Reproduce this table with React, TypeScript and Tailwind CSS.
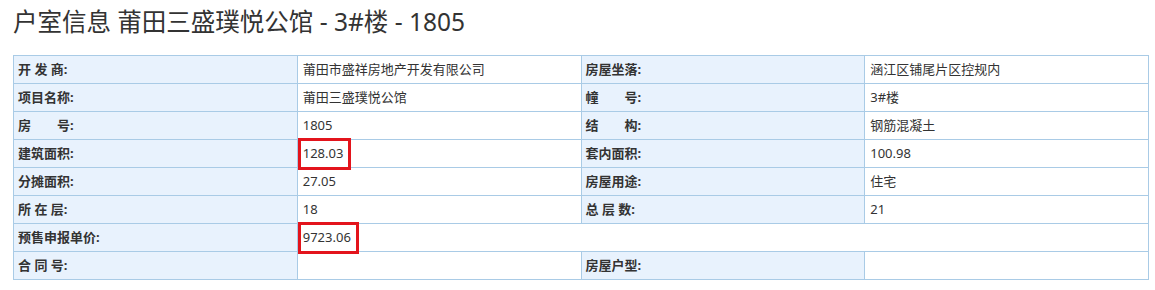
import type { ReactNode } from 'react';

type Cell = { label: string; value?: ReactNode; boxed?: boolean };

const rows: { left: Cell; right?: Cell }[] = [
  { left: { label: '开 发 商:', value: '莆田市盛祥房地产开发有限公司' }, right: { label: '房屋坐落:', value: '涵江区铺尾片区控规内' } },
  { left: { label: '项目名称:', value: '莆田三盛璞悦公馆' }, right: { label: '幢\u3000\u3000号:', value: '3#楼' } },
  { left: { label: '房\u3000\u3000号:', value: '1805' }, right: { label: '结\u3000\u3000构:', value: '钢筋混凝土' } },
  { left: { label: '建筑面积:', value: '128.03', boxed: true }, right: { label: '套内面积:', value: '100.98' } },
  { left: { label: '分摊面积:', value: '27.05' }, right: { label: '房屋用途:', value: '住宅' } },
  { left: { label: '所 在 层:', value: '18' }, right: { label: '总 层 数:', value: '21' } },
  { left: { label: '预售申报单价:', value: '9723.06', boxed: true } },
  { left: { label: '合 同 号:', value: '' }, right: { label: '房屋户型:', value: '' } },
];

function Value({ cell }: { cell: Cell }) {
  if (!cell.boxed) return <>{cell.value}</>;
  return (
    <span className="relative inline-block">
      {cell.value}
      <span className="pointer-events-none absolute -top-[6px] -bottom-[7px] -left-[5px] -right-[8px] border-[3px] border-[#e3141c]" />
    </span>
  );
}

const labelCls =
  'h-[28px] border border-[#a9cbe6] bg-[#e8f2fd] px-[4px] text-left align-middle text-[13px] font-bold text-[#333]';
const valueCls = 'h-[28px] border border-[#a9cbe6] bg-white px-[5px] align-middle text-[13px] text-[#333]';

export default function App() {
  return (
    <div
      className="min-h-[290px] bg-white pl-[13px] pr-[6px] pt-[6px] text-[#333]"
      style={{ fontFamily: '"Noto Sans", "Noto Sans CJK SC", sans-serif' }}
    >
      <h1 className="text-[24.5px] font-normal leading-[32px] text-[#333]">户室信息 莆田三盛璞悦公馆 - 3#楼 - 1805</h1>
      <table className="mt-[17px] w-full table-fixed border-collapse">
        <tbody>
          {rows.map((r, i) => (
            <tr key={i}>
              <td className={labelCls}>{r.left.label}</td>
              {r.right ? (
                <>
                  <td className={valueCls}>
                    <Value cell={r.left} />
                  </td>
                  <td className={labelCls}>{r.right.label}</td>
                  <td className={valueCls}>{r.right.value}</td>
                </>
              ) : (
                <td className={valueCls} colSpan={3}>
                  <Value cell={r.left} />
                </td>
              )}
            </tr>
          ))}
        </tbody>
      </table>
    </div>
  );
}
